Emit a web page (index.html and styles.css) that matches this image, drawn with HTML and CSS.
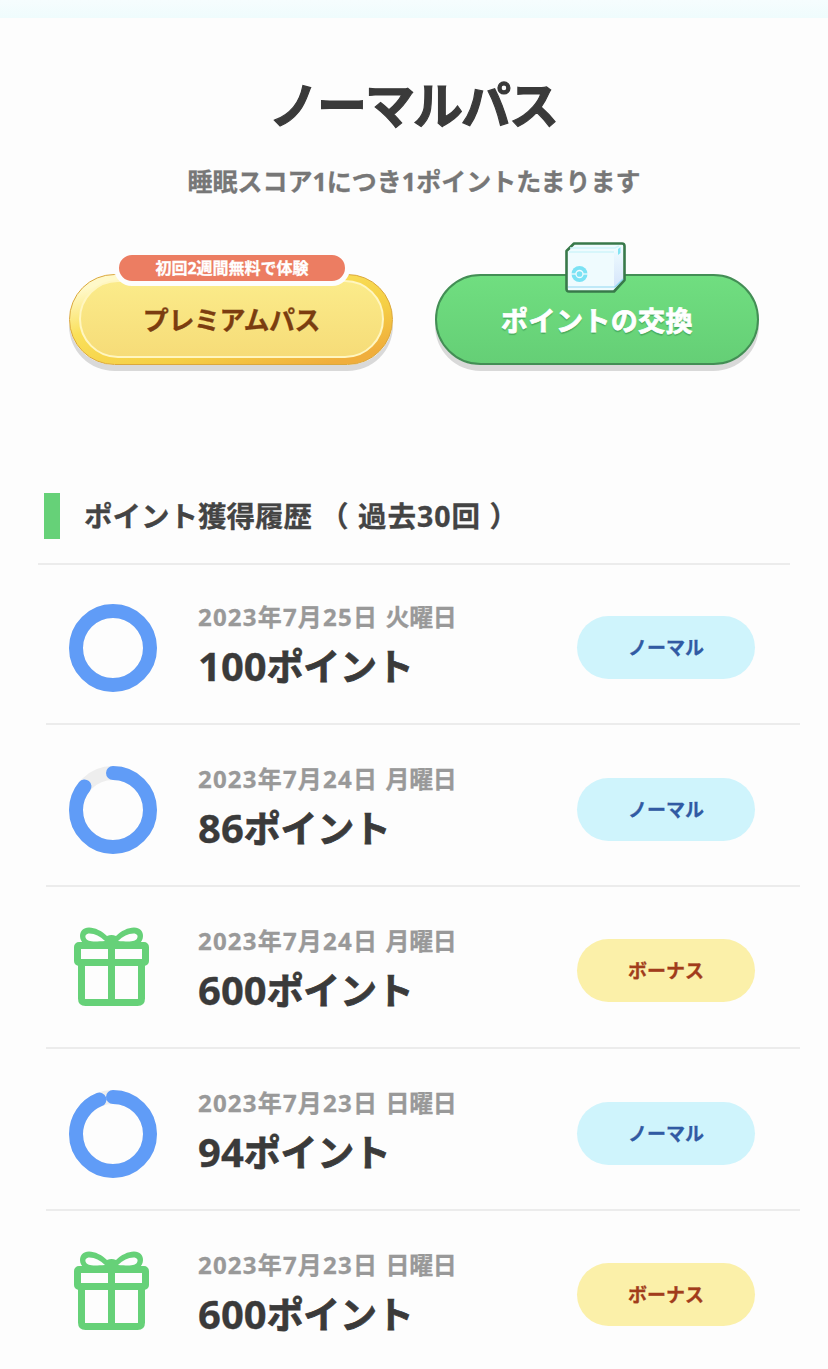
FILE: index.html
```
<!DOCTYPE html>
<html lang="ja">
<head>
    <meta charset="UTF-8">
    <title>ノーマルパス</title>
    <link rel="stylesheet" href="styles.css">
</head>
<body>
<svg width="0" height="0" class="defs">
    <symbol id="gift" viewBox="0 0 76 80">
        <g fill="none" stroke="#66d178" stroke-width="7">
            <rect x="3.500" y="18.500" width="68" height="17" rx="1.500"/>
            <path d="M7.500 36V71.500Q7.500 75.500 11.500 75.500H63.500Q67.500 75.500 67.500 71.500V36M37.500 17V75"/>
        </g>
        <path fill="#66d178" fill-rule="evenodd" d="M33 9C28 4 21 0.500 15 0.500C9 0.500 6 4.500 6 9C6 12 7.500 14.500 9.500 17H65.500C67.500 14.500 69 12 69 9C69 4.500 66 0.500 60 0.500C54 0.500 47 4 42 9Q37.500 7 33 9ZM31 14C26 9 21 6.500 15.500 6.500C12 6.500 10.500 9 12 11.500C13.500 14.500 18 15 31 14ZM44 14C49 9 54 6.500 59.500 6.500C63 6.500 64.500 9 63 11.500C61.500 14.500 57 15 44 14Z"/>
    </symbol>
</svg>
<div class="top-bar"></div>
<header class="pass">
    <h1>ノーマルパス</h1>
    <p class="pass-note">睡眠スコア1につき1ポイントたまります</p>
    <div class="buttons">
        <button class="btn btn-premium" type="button">
            <span class="ribbon">初回2週間無料で体験</span>
            <span class="btn-inner">プレミアムパス</span>
        </button>
        <button class="btn btn-exchange" type="button">
            <svg class="box-icon" width="62" height="52" viewBox="0 0 62 52">
                <defs>
                    <linearGradient id="side" x1="0" y1="0" x2="0" y2="1">
                        <stop offset="0" stop-color="#effcfe"/>
                        <stop offset="1" stop-color="#d5e4fb"/>
                    </linearGradient>
                </defs>
                <path d="M9 1.500H57Q59.500 1.500 59.500 4V38L49 49.500H4Q1.500 49.500 1.500 47V9Z" fill="#effbfe" stroke="#38794a" stroke-width="2.600" stroke-linejoin="round"/>
                <path d="M49 11L58 5V37L49 46Z" fill="url(#side)"/>
                <path d="M5 6H50L54 4M4 10H49" stroke="#d0f5fa" stroke-width="1.500" fill="none"/>
                <path d="M53 7L55.500 5V11L53 13Z" fill="#83e4f3"/>
                <path d="M3 45H50L58 37" fill="none" stroke="#8fd8f2" stroke-width="1.200"/>
                <circle cx="14.500" cy="32" r="8" fill="#7be2f4"/>
                <path d="M6 32H23" stroke="#effbfe" stroke-width="1.300"/>
                <circle cx="14.500" cy="32" r="3.500" fill="#7be2f4" stroke="#effbfe" stroke-width="1.300"/>
            </svg>
            <span class="btn-text">ポイントの交換</span>
        </button>
    </div>
</header>
<section class="history">
    <h2><span class="bar"></span><span>ポイント獲得履歴</span><span class="past">（ 過去30回 ）</span></h2>
    <ul class="list">
        <li class="row">
            <svg class="ring" viewBox="0 0 88 88"><circle class="track" cx="44" cy="44" r="37"/><circle class="value" cx="44" cy="44" r="37" pathLength="100" stroke-dasharray="100 0"/></svg>
            <div class="info">
                <div class="date">2023年7月25日 <span>火曜日</span></div>
                <div class="points">100<span>ポイント</span></div>
            </div>
            <span class="tag tag-normal">ノーマル</span>
        </li>
        <li class="row">
            <svg class="ring" viewBox="0 0 88 88"><circle class="track" cx="44" cy="44" r="37"/><circle class="value" cx="44" cy="44" r="37" pathLength="100" stroke-dasharray="86 14"/></svg>
            <div class="info">
                <div class="date">2023年7月24日 <span>月曜日</span></div>
                <div class="points">86<span>ポイント</span></div>
            </div>
            <span class="tag tag-normal">ノーマル</span>
        </li>
        <li class="row">
            <svg class="gift"><use href="#gift"/></svg>
            <div class="info">
                <div class="date">2023年7月24日 <span>月曜日</span></div>
                <div class="points">600<span>ポイント</span></div>
            </div>
            <span class="tag tag-bonus">ボーナス</span>
        </li>
        <li class="row">
            <svg class="ring" viewBox="0 0 88 88"><circle class="track" cx="44" cy="44" r="37"/><circle class="value" cx="44" cy="44" r="37" pathLength="100" stroke-dasharray="94 6"/></svg>
            <div class="info">
                <div class="date">2023年7月23日 <span>日曜日</span></div>
                <div class="points">94<span>ポイント</span></div>
            </div>
            <span class="tag tag-normal">ノーマル</span>
        </li>
        <li class="row">
            <svg class="gift"><use href="#gift"/></svg>
            <div class="info">
                <div class="date">2023年7月23日 <span>日曜日</span></div>
                <div class="points">600<span>ポイント</span></div>
            </div>
            <span class="tag tag-bonus">ボーナス</span>
        </li>
    </ul>
</section>
</body>
</html>
```
FILE: styles.css
```
* {
    box-sizing: border-box;
}

body {
    margin: 0;
    width: 828px;
    height: 1369px;
    overflow: hidden;
    background-color: #fdfdfd;
    color: #3a3a3a;
    font-family: "Noto Sans", "Noto Sans CJK JP", sans-serif;
    font-weight: bold;
    -webkit-text-stroke: 0.3px;
}

.defs {
    display: block;
    height: 0;
}

.top-bar {
    height: 18px;
    background: linear-gradient(#f6fdfe, #effcfd);
}

.pass {
    height: 475px;
    padding-top: 51px;
    text-align: center;
}

h1 {
    margin: 0;
    padding-right: 2px;
    font-size: 50px;
    line-height: 72px;
    letter-spacing: -2px;
    -webkit-text-stroke: 1.2px;
}

.pass-note {
    margin: 22px 0 0;
    font-size: 25px;
    line-height: 36px;
    color: #777;
}

.buttons {
    display: flex;
    gap: 42px;
    padding: 75px 69px 0;
}

.btn {
    position: relative;
    width: 324px;
    height: 91px;
    padding: 0;
    border: 0;
    border-radius: 46px;
    font: inherit;
    font-size: 27px;
    box-shadow: 0 6px 0 #d9d9d9;
}

.btn-premium {
    padding: 5px 8px 6px 9px;
    border: 1px solid #dba83d;
    background: linear-gradient(165deg, #fff9c9 10%, #fae05a 35%, #f5cf45 65%, #f0ae3c 90%, #f0ae3c 100%);
    color: #7b3d10;
    font-size: 26px;
}

.btn-inner {
    display: flex;
    height: 100%;
    align-items: center;
    justify-content: center;
    border: 2px solid #fff6c0;
    border-radius: 40px;
    background: linear-gradient(#fbeb8a, #f6dc78);
    letter-spacing: -0.4px;
}

.ribbon {
    position: absolute;
    top: -25px;
    left: 44px;
    width: 236px;
    height: 36px;
    border: 5px solid #fdfdfd;
    border-radius: 18px;
    background-color: #ec7d62;
    color: #fff;
    font-size: 16px;
    line-height: 26px;
}

.btn-exchange {
    border: 2px solid #438e55;
    background: linear-gradient(#70de80, #65cf76);
    color: #fff;
    letter-spacing: 0.4px;
    text-shadow: 0 2px 1px #4aad60;
    -webkit-text-stroke: 0.8px;
}

.box-icon {
    position: absolute;
    top: -34px;
    left: 128px;
}

h2 {
    display: flex;
    align-items: center;
    height: 46px;
    margin: 0 0 24px;
    padding-left: 44px;
    font-size: 28.5px;
    line-height: 44px;
    color: #444;
}

.past {
    margin-left: 8px;
    letter-spacing: 1px;
}

.bar {
    width: 16px;
    height: 46px;
    margin-right: 24px;
    background-color: #66d178;
}

.list {
    margin: 0;
    padding: 0 28px 0 46px;
    list-style: none;
}

.list::before {
    content: "";
    display: block;
    width: 752px;
    height: 2px;
    margin-left: -8px;
    background-color: #ececec;
}

.row {
    display: flex;
    align-items: center;
    height: 162px;
    padding: 9px 45px 0 23px;
    border-bottom: 2px solid #ececec;
}

.row:first-child {
    height: 160px;
    padding-top: 7px;
}

.ring {
    width: 88px;
    height: 88px;
    transform: rotate(-90deg);
}

.ring circle {
    fill: none;
    stroke-width: 14;
}

.track {
    stroke: #eee;
}

.ring .value {
    stroke: #609cf7;
    stroke-linecap: round;
}

.gift {
    width: 76px;
    height: 80px;
    margin: -9px 7px 0 5px;
}

.info {
    flex: 1;
    margin: 1px 0 0 41px;
}

.date {
    font-size: 24px;
    line-height: 36px;
    letter-spacing: 1.2px;
    color: #999;
}

.date span {
    letter-spacing: -0.4px;
}

.points {
    font-size: 40px;
    line-height: 62px;
}

.points span {
    font-size: 37px;
    letter-spacing: -0.3px;
    -webkit-text-stroke: 0.8px;
}

.tag {
    width: 178px;
    height: 63px;
    border-radius: 32px;
    text-align: center;
    font-size: 19px;
    line-height: 65px;
}

.tag-normal {
    background-color: #cff4fc;
    color: #315aa3;
}

.tag-bonus {
    margin-top: -2px;
    background-color: #fbf0a9;
    color: #a13c1b;
}
```
